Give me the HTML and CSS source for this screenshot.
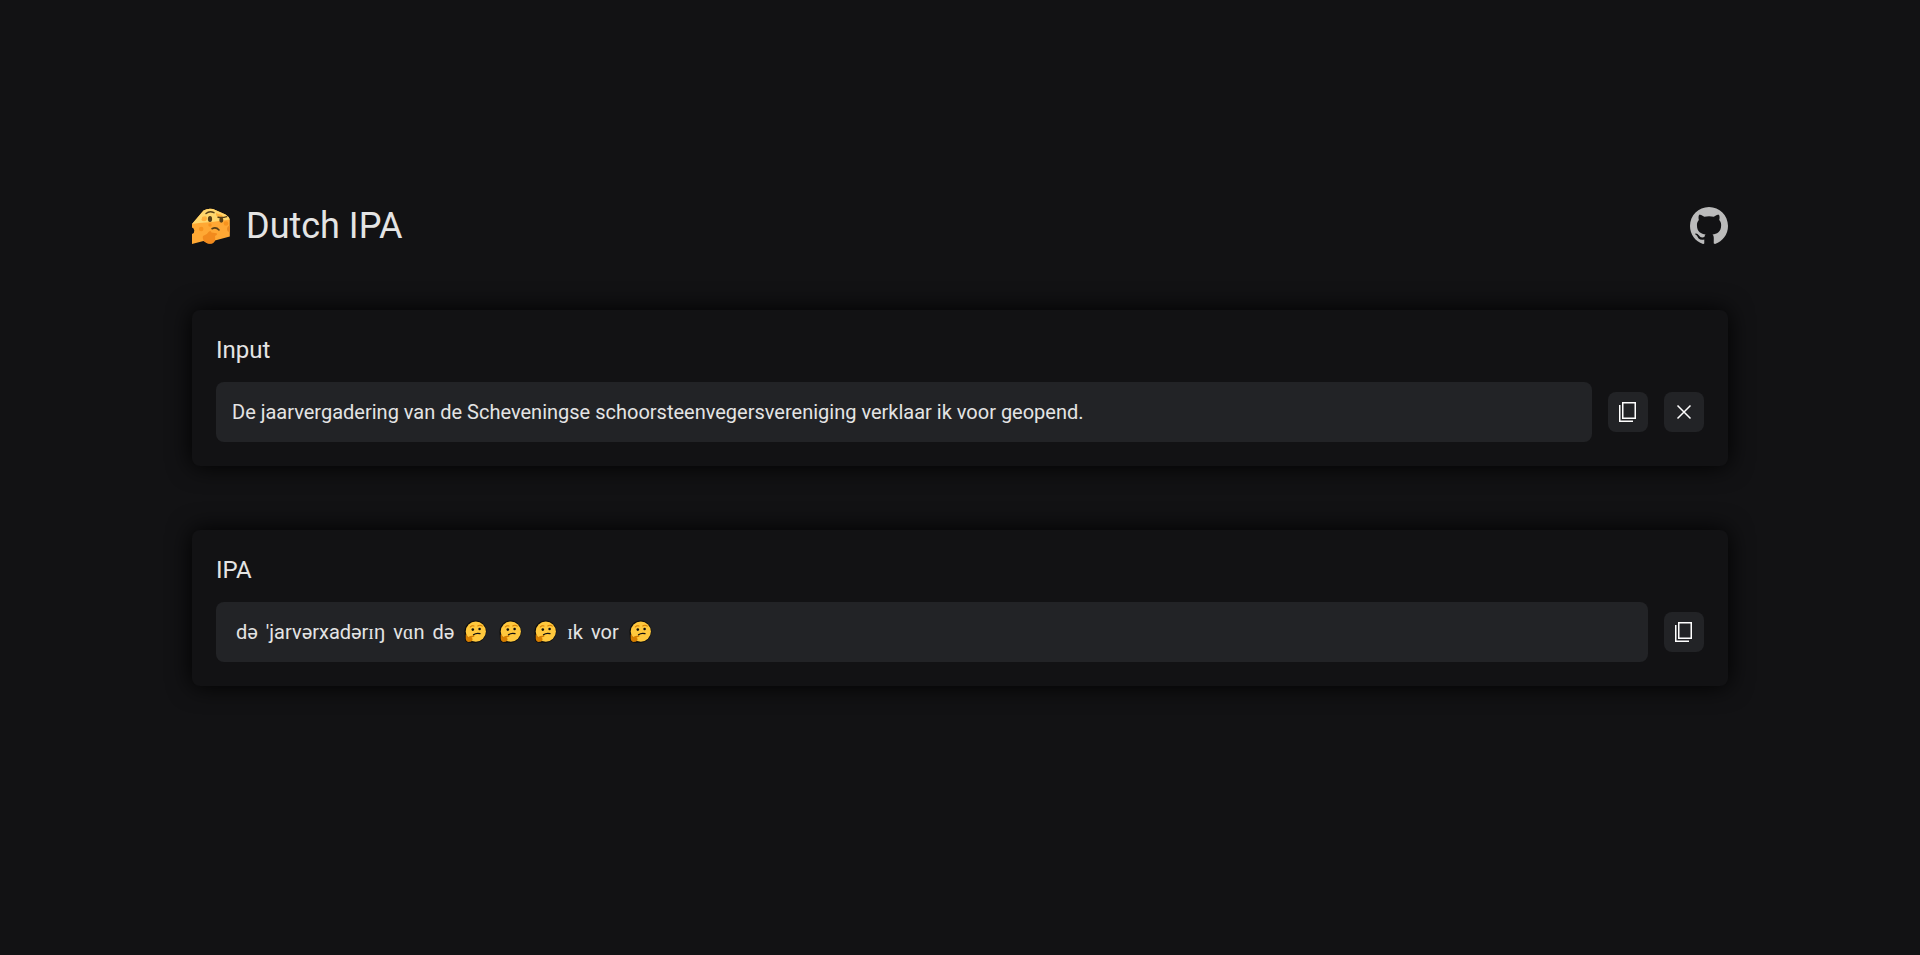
FILE: index.html
```html
<!DOCTYPE html>
<html lang="en">
<head>
<meta charset="utf-8">
<meta name="viewport" content="width=device-width, initial-scale=1">
<title>Dutch IPA</title>
<link rel="stylesheet" href="styles.css">
</head>
<body>
<svg class="sprite" aria-hidden="true">
  <symbol id="thinking" viewBox="0 0 27 28">
    <path d="M13.700 2.500a11.100 11.100 0 1 1-3 21.900Q3.300 25.500 3 21.500L2.600 15A11.100 11.100 0 0 1 13.700 2.500z" fill="#0c0c0c"/>
    <circle cx="13.800" cy="13.600" r="10.100" fill="#ffc83d"/>
    <path d="M3.700 16.800c.7-.7 1.300-.2 1.500.7l.6 1.700c2-.9 4.200-1.700 6.200-1.600 1 .2.800.9-.1 1.100l-2.500.9c2 1 1.300 3.700-1 4.200-3 .6-4.500-.6-4.700-3z" fill="#d67d00"/>
    <circle cx="10.800" cy="11.600" r="1.300" fill="#111"/>
    <circle cx="17.600" cy="11" r="1.300" fill="#111"/>
    <path d="M8.300 9q1.500-1.700 3.700-1M15.800 7.900q2.300-1.300 4.400.2" fill="none" stroke="#d67d00" stroke-width="1.100" stroke-linecap="round"/>
    <path d="M11.500 16.700q2.700-2 6.500-1.100" fill="none" stroke="#111" stroke-width="1.300" stroke-linecap="round"/>
  </symbol>
  <symbol id="copy" viewBox="0 0 24 24">
    <path d="M6.750 2.750h12.500v15.500H6.750zM3.750 5v16.250H17" fill="none" stroke="currentColor" stroke-width="1.500"/>
  </symbol>
</svg>
<main class="page">
  <header class="header">
    <div class="brand">
      <svg class="logo" viewBox="0 0 38 38" aria-hidden="true">
        <path d="M0 17 11.500 3.500Q16 .8 21 2l12.500 5.500q4 2.500 4.300 5V29.500L23 33.500q-1 3.500-7 3L11.500 34 0 37V27q2.600-1 2.300-3.500Q2 21 0 20.500z" fill="#ffa834"/>
        <path d="M0 17 11.500 3.500Q16 .8 21 2l12.500 5.500q4 2.500 4.300 5L20 15 7 16z" fill="#ffd66c"/>
        <path d="M24 6l6 2q2 2-1.500 2.500-5-.2-4.500-4.500M10 10q5-2 5 1t-5 2z" fill="#ffb23c"/>
        <path d="M38 18.500q-3 .5-3 3.500t3 3z" fill="#e98a22"/>
        <circle cx="9.200" cy="22" r="2.300" fill="#f7931e"/>
        <circle cx="18" cy="18" r="1.700" fill="#f7931e"/>
        <circle cx="34" cy="16.500" r="2.300" fill="#f7931e"/>
        <ellipse cx="12" cy="12.500" rx="2.600" ry="1.800" fill="#ffae3a"/>
        <path d="M11 29q4-1 6-4.500 2-1.500 2.500 1l5 .8q1.500.7 0 1.700l-1.500 1q1 5-2.500 7.500-5 1-7.500-1.500-3-3-2-6" fill="#f28a1d"/>
        <ellipse cx="18" cy="12" rx="2.100" ry="2.900" fill="#573f17"/>
        <ellipse cx="29.300" cy="13" rx="2" ry="2.700" fill="#573f17"/>
        <path d="M14 6.500q3.500-3 8-.8M26 10.200q4.500.8 8.700-.6" fill="none" stroke="#573f17" stroke-width="1.400" stroke-linecap="round"/>
        <path d="M20 21.700q4-2.200 7 1.300" fill="none" stroke="#573f17" stroke-width="1.600" stroke-linecap="round"/>
      </svg>
      <h1 class="title">Dutch IPA</h1>
    </div>
    <a class="github" href="#" aria-label="GitHub">
      <svg class="github-icon" viewBox="0 0 16 16" aria-hidden="true"><path fill="currentColor" d="M8 0C3.580 0 0 3.580 0 8c0 3.540 2.290 6.530 5.470 7.590.4.070.55-.17.55-.38 0-.19-.01-.82-.01-1.490-2.010.37-2.530-.49-2.690-.94-.09-.23-.48-.94-.82-1.130-.28-.15-.68-.52-.01-.53.630-.01 1.080.58 1.230.82.720 1.210 1.870.87 2.330.66.070-.52.280-.87.510-1.070-1.780-.2-3.640-.89-3.640-3.950 0-.87.310-1.590.82-2.150-.08-.2-.36-1.020.08-2.120 0 0 .67-.21 2.200.82.640-.18 1.320-.27 2-.27s1.360.09 2 .27c1.530-1.040 2.200-.82 2.200-.82.440 1.100.160 1.920.080 2.120.51.560.82 1.270.82 2.150 0 3.070-1.870 3.750-3.650 3.950.29.25.54.73.54 1.480 0 1.070-.01 1.930-.01 2.200 0 .21.150.46.550.38A8.013 8.013 0 0 0 16 8c0-4.420-3.580-8-8-8z"/></svg>
    </a>
  </header>

  <section class="card">
    <h2 class="card-title"><label for="source">Input</label></h2>
    <div class="row">
      <input class="field" id="source" type="text" spellcheck="false" value="De jaarvergadering van de Scheveningse schoorsteenvegersvereniging verklaar ik voor geopend.">
      <button class="button" type="button" aria-label="Copy input"><svg class="icon"><use href="#copy"/></svg></button>
      <button class="button" type="button" aria-label="Clear input"><svg class="icon" viewBox="0 0 24 24"><path d="M5.500 5.500l13 13M18.500 5.500l-13 13" fill="none" stroke="currentColor" stroke-width="1.500"/></svg></button>
    </div>
  </section>

  <section class="card">
    <h2 class="card-title">IPA</h2>
    <div class="row">
      <output class="field words" for="source">
        <span class="word">də</span>
        <span class="word">'jarvərxadərɪŋ</span>
        <span class="word">vɑn</span>
        <span class="word">də</span>
        <span class="word"><svg class="emoji" role="img" aria-label="Unknown word"><use href="#thinking"/></svg></span>
        <span class="word"><svg class="emoji" role="img" aria-label="Unknown word"><use href="#thinking"/></svg></span>
        <span class="word"><svg class="emoji" role="img" aria-label="Unknown word"><use href="#thinking"/></svg></span>
        <span class="word">ɪk</span>
        <span class="word">vor</span>
        <span class="word"><svg class="emoji" role="img" aria-label="Unknown word"><use href="#thinking"/></svg></span>
      </output>
      <button class="button" type="button" aria-label="Copy IPA"><svg class="icon"><use href="#copy"/></svg></button>
    </div>
  </section>
</main>
</body>
</html>
```

FILE: styles.css
```css
*,
*::before,
*::after {
  box-sizing: border-box;
}

body {
  margin: 0;
  background: #121214;
  color: #e4e4e4;
  font-family: Roboto, "Liberation Serif", serif;
  font-size: 20px;
}

.sprite {
  position: absolute;
  width: 0;
  height: 0;
}

.page {
  display: flex;
  flex-direction: column;
  justify-content: center;
  min-height: 100vh;
  padding: 0 10%;
}

.header {
  display: flex;
  align-items: center;
  justify-content: space-between;
  margin-bottom: 63px;
}

.brand {
  display: flex;
  align-items: center;
  gap: 16px;
}

.logo,
.github-icon {
  display: block;
  width: 38px;
  height: 38px;
}

.title {
  margin: 0;
  font-size: 36px;
  font-weight: 400;
  line-height: 42px;
}

.github {
  color: #bbb;
}

.card {
  margin-bottom: 64px;
  padding: 24px;
  border-radius: 8px;
  background: #121214;
  box-shadow: 0 0 24px #000;
}

.card-title {
  margin: 0 0 16px;
  font-size: 24px;
  font-weight: 400;
  line-height: 32px;
}

.row {
  display: flex;
  align-items: center;
  gap: 16px;
}

.field {
  flex: 1;
  min-width: 0;
  min-height: 60px;
  padding: 16px;
  border: 0;
  border-radius: 8px;
  background: #222326;
  color: inherit;
  font: inherit;
  line-height: 28px;
}

.words {
  display: flex;
  flex-wrap: wrap;
}

.word {
  padding: 0 4px;
}

.emoji {
  display: block;
  width: 27px;
  height: 28px;
}

.button {
  display: flex;
  flex: none;
  align-items: center;
  justify-content: center;
  width: 40px;
  height: 40px;
  padding: 0;
  border: 0;
  border-radius: 8px;
  background: #222326;
  color: #fff;
  cursor: pointer;
}

.icon {
  display: block;
  width: 24px;
  height: 24px;
}
```
